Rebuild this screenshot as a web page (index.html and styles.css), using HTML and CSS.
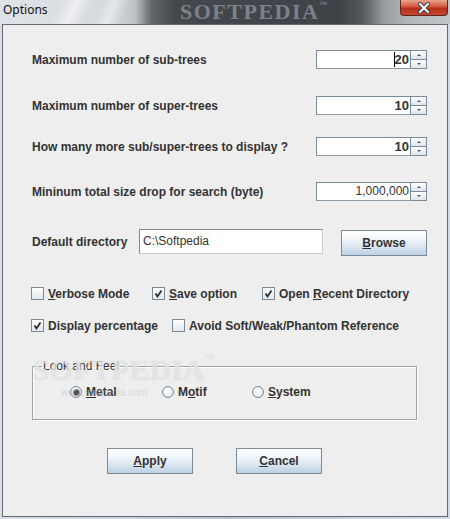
FILE: index.html
```html
<!DOCTYPE html>
<html lang="en">
<head>
    <meta charset="UTF-8">
    <title>Options</title>
    <link rel="stylesheet" href="styles.css">
</head>
<body>

    <div class="titlebar">
        <span class="title">Options</span>
        <span class="brand">SOFTPEDIA<small>™</small></span>
        <span class="close">
            <svg width="16" height="12" viewBox="0 0 16 12">
                <path d="M4 2 L12 10 M12 2 L4 10" stroke="#3a3f48" stroke-width="4" stroke-linecap="round"/>
                <path d="M4 2 L12 10 M12 2 L4 10" stroke="#ffffff" stroke-width="2.2" stroke-linecap="round"/>
            </svg>
        </span>
    </div>

    <div class="content">

        <div class="row r1">
            <span class="label">Maximum number of sub-trees</span>
            <div class="spinner">
                <div class="field bold"><span class="caret"></span>20</div>
                <div class="arrows"><span class="arrow up"></span><span class="arrow down"></span></div>
            </div>
        </div>

        <div class="row r2">
            <span class="label">Maximum number of super-trees</span>
            <div class="spinner">
                <div class="field bold">10</div>
                <div class="arrows"><span class="arrow up"></span><span class="arrow down"></span></div>
            </div>
        </div>

        <div class="row r3">
            <span class="label">How many more sub/super-trees to display ?</span>
            <div class="spinner">
                <div class="field bold">10</div>
                <div class="arrows"><span class="arrow up"></span><span class="arrow down"></span></div>
            </div>
        </div>

        <div class="row r4">
            <span class="label">Mininum total size drop for search (byte)</span>
            <div class="spinner">
                <div class="field">1,000,000</div>
                <div class="arrows"><span class="arrow up"></span><span class="arrow down"></span></div>
            </div>
        </div>

        <div class="dir-row">
            <span class="label dir-label">Default directory</span>
            <div class="textfield">C:\Softpedia</div>
            <button class="btn browse"><u>B</u>rowse</button>
        </div>

        <div class="checks c1">
            <label class="check w1"><span class="box"></span><span><u>V</u>erbose Mode</span></label>
            <label class="check w2"><span class="box on"><svg width="11" height="11" viewBox="0 0 11 11"><polyline points="2.5,5.5 4.5,8.5 8.5,2.5" fill="none" stroke="#2b2b2b" stroke-width="1.8"/></svg></span><span><u>S</u>ave option</span></label>
            <label class="check"><span class="box on"><svg width="11" height="11" viewBox="0 0 11 11"><polyline points="2.5,5.5 4.5,8.5 8.5,2.5" fill="none" stroke="#2b2b2b" stroke-width="1.8"/></svg></span><span>Open <u>R</u>ecent Directory</span></label>
        </div>

        <div class="checks c2">
            <label class="check w3"><span class="box on"><svg width="11" height="11" viewBox="0 0 11 11"><polyline points="2.5,5.5 4.5,8.5 8.5,2.5" fill="none" stroke="#2b2b2b" stroke-width="1.8"/></svg></span><span>Display percentage</span></label>
            <label class="check"><span class="box"></span><span>Avoid Soft/Weak/Phantom Reference</span></label>
        </div>

        <fieldset class="group">
            <legend>Look and Feel</legend>
            <div class="radios">
                <label class="radio w4"><span class="dot on"></span><span><u>M</u>etal</span></label>
                <label class="radio w5"><span class="dot"></span><span>M<u>o</u>tif</span></label>
                <label class="radio"><span class="dot"></span><span><u>S</u>ystem</span></label>
            </div>
        </fieldset>

        <div class="buttons">
            <button class="btn action"><u>A</u>pply</button>
            <button class="btn action"><u>C</u>ancel</button>
        </div>

        <div class="watermark">SOFTPEDIA<small>™</small></div>
        <div class="watermark-url">www.softpedia.com</div>

    </div>

</body>
</html>
```

FILE: styles.css
```css
body {
    margin: 0;
    width: 450px;
    height: 519px;
    overflow: hidden;
    background: linear-gradient(90deg, #d9dee5, #c7d2de 30%, #b9c3ce 50%, #c9d3de 80%, #d3dce6);
    font-family: "Liberation Sans", Arial, sans-serif;
    font-size: 12px;
    color: #333333;
}
.titlebar {
    height: 24px;
    display: flex;
    position: relative;
    background:
        linear-gradient(115deg, transparent 55px, rgba(255,255,255,0.55) 70px, transparent 85px, transparent 95px, rgba(255,255,255,0.4) 105px, transparent 118px),
        linear-gradient(90deg, #dfe2e6 0, #d6d9de 110px, #bfc3c8 135px, #62666b 152px, #44484d 175px, #3f4348 340px, #55595e 362px, #9a9ea3 385px, #b4b8bd 410px, #c2c6ca 450px);
}
.title {
    font-family: "Noto Sans", "Open Sans", sans-serif;
    font-size: 12px;
    color: #111;
    padding: 2px 0 0 3px;
    line-height: 16px;
}
.brand {
    position: absolute;
    left: 180px;
    top: 1px;
    font-family: "Liberation Serif", serif;
    font-weight: bold;
    font-size: 22px;
    line-height: 22px;
    letter-spacing: 1.5px;
    color: #85898e;
    opacity: 0.9;
}
.brand small {
    font-size: 8px;
    line-height: 8px;
    vertical-align: top;
}
.close {
    margin-left: auto;
    margin-right: 2px;
    width: 46px;
    height: 15px;
    border: 1px solid #5a2a22;
    border-top: none;
    border-radius: 0 0 4px 4px;
    background: linear-gradient(#e9a58f, #d2553b 45%, #b52f1b 55%, #c9462c);
    display: flex;
    align-items: center;
    justify-content: center;
    position: relative;
    z-index: 1;
}
.content {
    margin: 0 2px;
    height: 491px;
    border: 1px solid #656b73;
    background: #eeeeee;
    position: relative;
    display: flex;
    flex-direction: column;
}
.label {
    font-weight: bold;
}
.row {
    display: flex;
    align-items: center;
    justify-content: space-between;
    padding: 0 20px 0 29px;
    height: 19px;
}
.r1 { margin-top: 25px; }
.r2 { margin-top: 27px; }
.r3 { margin-top: 22px; }
.r4 { margin-top: 26px; }
.spinner {
    display: flex;
    width: 111px;
    height: 19px;
}
.field {
    flex: 1;
    background: #ffffff;
    border: 1px solid #7a8a99;
    border-bottom-color: #8c9aa7;
    padding-right: 1px;
    line-height: 17px;
    display: flex;
    align-items: center;
    justify-content: flex-end;
}
.bold {
    font-weight: bold;
    font-size: 13px;
}
.caret {
    width: 1px;
    height: 15px;
    background: #000;
}
.arrows {
    width: 16px;
    display: flex;
    flex-direction: column;
}
.arrow {
    flex: 1;
    border: 1px solid #7a8a99;
    border-left: none;
    background: linear-gradient(#ffffff, #dde4eb);
    display: flex;
    align-items: center;
    justify-content: center;
}
.arrow.down {
    border-top: none;
}
.arrow::after {
    content: "";
    border-left: 2px solid transparent;
    border-right: 2px solid transparent;
}
.up::after {
    border-bottom: 2px solid #555;
}
.down::after {
    border-top: 2px solid #555;
}
.dir-row {
    display: flex;
    align-items: center;
    padding-left: 29px;
    margin-top: 28px;
    height: 26px;
}
.dir-label {
    width: 107px;
}
.textfield {
    width: 179px;
    height: 23px;
    line-height: 23px;
    padding-left: 3px;
    background: #ffffff;
    border: 1px solid #7a8a99;
    border-right-color: #c5ccd3;
    border-bottom-color: #c5ccd3;
    margin-right: 18px;
    align-self: flex-start;
}
.btn {
    font-family: "Liberation Sans", Arial, sans-serif;
    font-size: 12px;
    font-weight: bold;
    color: #333333;
    border: 1px solid #7a8a99;
    background: linear-gradient(#ffffff 0%, #f3f7fb 30%, #dbe6f1 65%, #bcd0e4 100%);
    padding: 0;
    width: 86px;
    height: 26px;
}
.browse {
    margin-top: 2px;
}
.checks {
    display: flex;
    align-items: center;
    padding-left: 28px;
    height: 13px;
}
.c1 { margin-top: 32px; }
.c2 { margin-top: 19px; }
.check {
    display: flex;
    align-items: center;
    gap: 4px;
    font-weight: bold;
}
.w1 { width: 121px; }
.w2 { width: 110px; }
.w3 { width: 141px; }
.box {
    width: 11px;
    height: 11px;
    border: 1px solid #7a8a99;
    background: linear-gradient(#ffffff, #dfe6ed);
    display: flex;
    align-items: center;
    justify-content: center;
}
.group {
    margin: 27px 0 0 29px;
    width: 374px;
    padding: 0 0 21px 9px;
    border: 1px solid #a3a3a3;
    box-shadow: 1px 1px 0 #ffffff, inset 1px 1px 0 #ffffff;
}
.group legend {
    padding: 0 1px;
    line-height: 14px;
    font-size: 12px;
    color: #333333;
}
.radios {
    display: flex;
    align-items: center;
    margin: 13px 0 0 28px;
    height: 12px;
}
.radio {
    display: flex;
    align-items: center;
    gap: 4px;
    font-weight: bold;
}
.w4 { width: 92px; }
.w5 { width: 90px; }
.dot {
    width: 10px;
    height: 10px;
    border: 1px solid #7a8a99;
    border-radius: 50%;
    background: radial-gradient(circle at 40% 35%, #ffffff, #d6e0ea);
    display: flex;
    align-items: center;
    justify-content: center;
}
.dot.on::after {
    content: "";
    width: 5px;
    height: 5px;
    border-radius: 50%;
    background: #333;
    box-shadow: 0 0 0 1px #8a8a8a;
}
.buttons {
    display: flex;
    gap: 43px;
    padding-left: 104px;
    margin-top: 28px;
}
.watermark {
    position: absolute;
    left: 30px;
    top: 328px;
    font-family: "Liberation Serif", serif;
    font-weight: bold;
    font-size: 30px;
    color: rgba(255,255,255,0.55);
    text-shadow: 0 0 1px rgba(170,170,170,0.6);
    pointer-events: none;
}
.watermark small {
    font-size: 9px;
    vertical-align: top;
}
.watermark-url {
    position: absolute;
    left: 58px;
    top: 362px;
    font-size: 10px;
    color: rgba(190,190,190,0.5);
    pointer-events: none;
}
```
